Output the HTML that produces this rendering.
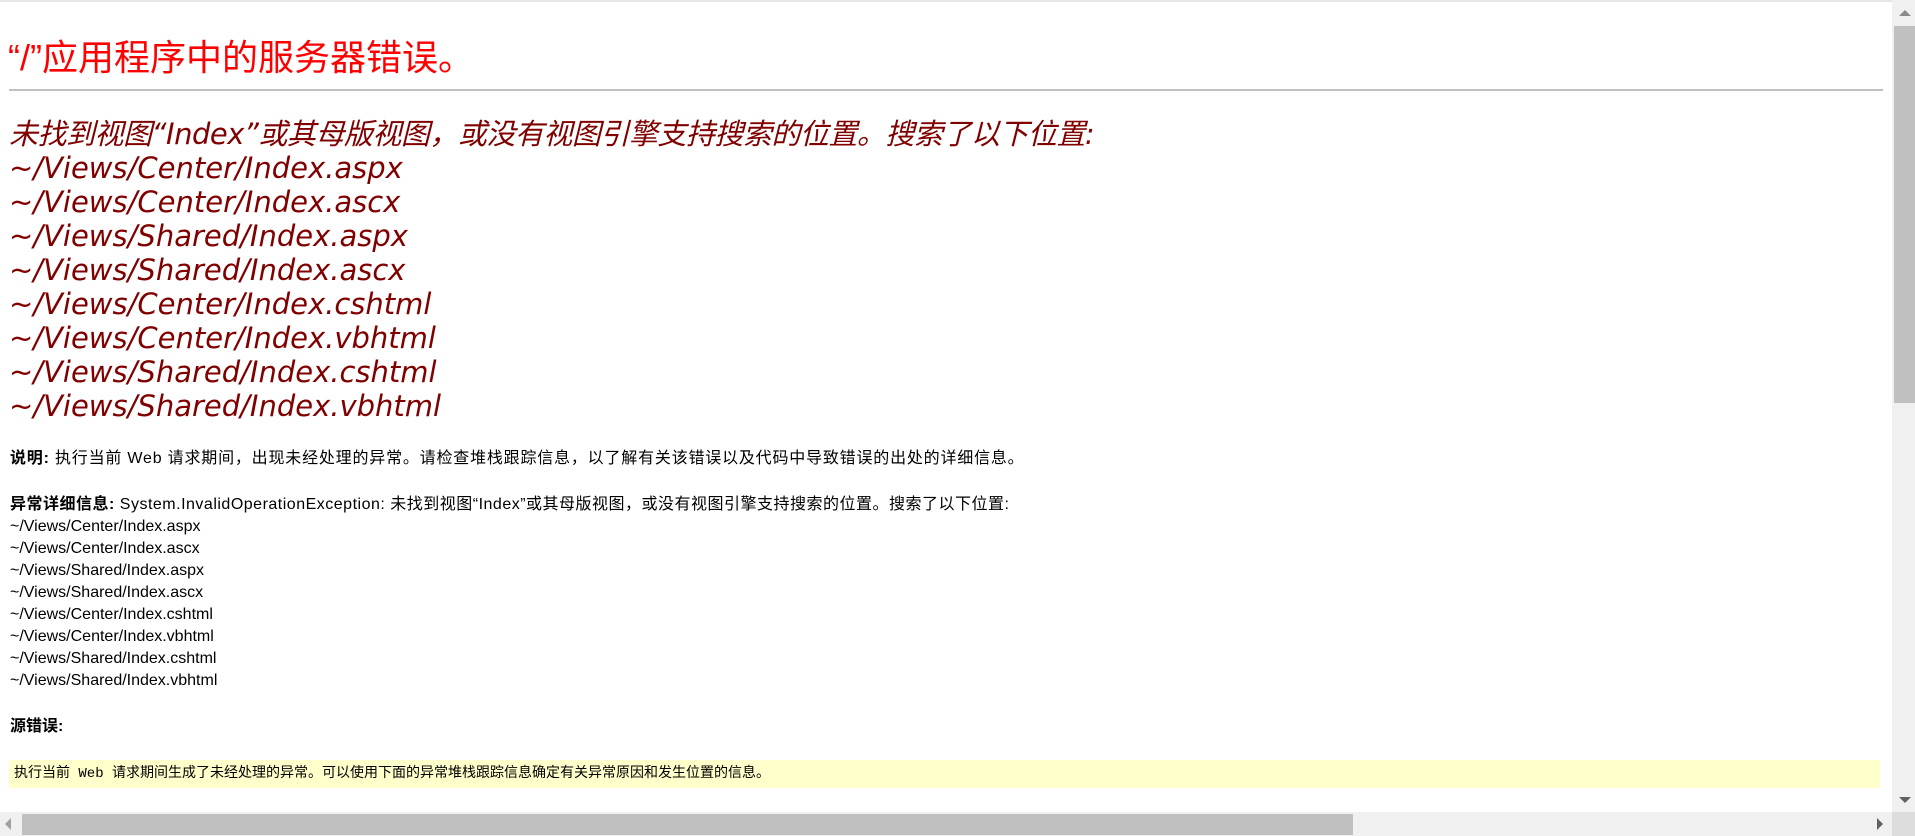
<!DOCTYPE html>
<html><head><meta charset="utf-8"><style>
html,body{margin:0;padding:0;width:1915px;height:836px;overflow:hidden;background:#fff;}
.a{position:absolute;white-space:nowrap;}
.t{font-family:"Liberation Sans","Noto Sans CJK SC",sans-serif;font-size:36px;color:#f00;left:8px;top:29px;}
.h{font-family:"DejaVu Sans","Noto Sans CJK SC",sans-serif;font-style:italic;font-size:29px;color:#800000;left:9px;line-height:34px;top:117px;}
.h span{letter-spacing:-0.5px}
.b{font-family:"Liberation Sans","Noto Sans CJK SC",sans-serif;font-size:16px;color:#000;left:10px;line-height:22px;}
.code{position:absolute;left:9px;top:760px;width:1871px;height:28px;background:#ffffcc;font-family:"Liberation Mono","Noto Sans CJK SC",monospace;font-size:14px;line-height:28px;text-indent:5px;}
</style></head><body>
<div style="position:absolute;left:0;top:0;width:1892px;height:2px;background:#e6e6e6"></div>
<div class="a t">“/”应用程序中的服务器错误。</div>
<div style="position:absolute;left:9px;top:89px;width:1874px;height:2px;background:#c0c0c0"></div>
<div class="a h"><span>未找到视图“Index”或其母版视图，或没有视图引擎支持搜索的位置。搜索了以下位置:</span><br>~/Views/Center/Index.aspx<br>~/Views/Center/Index.ascx<br>~/Views/Shared/Index.aspx<br>~/Views/Shared/Index.ascx<br>~/Views/Center/Index.cshtml<br>~/Views/Center/Index.vbhtml<br>~/Views/Shared/Index.cshtml<br>~/Views/Shared/Index.vbhtml</div>
<div class="a b" style="top:448px;letter-spacing:0.8px"><b>说明:</b> 执行当前 Web 请求期间，出现未经处理的异常。请检查堆栈跟踪信息，以了解有关该错误以及代码中导致错误的出处的详细信息。</div>
<div class="a b" style="top:494px"><span style="letter-spacing:0.5px"><b>异常详细信息:</b> System.InvalidOperationException: 未找到视图“Index”或其母版视图，或没有视图引擎支持搜索的位置。搜索了以下位置:</span><br>~/Views/Center/Index.aspx<br>~/Views/Center/Index.ascx<br>~/Views/Shared/Index.aspx<br>~/Views/Shared/Index.ascx<br>~/Views/Center/Index.cshtml<br>~/Views/Center/Index.vbhtml<br>~/Views/Shared/Index.cshtml<br>~/Views/Shared/Index.vbhtml</div>
<div class="a b" style="top:716px"><b>源错误:</b></div>
<div class="code">执行当前 Web 请求期间生成了未经处理的异常。可以使用下面的异常堆栈跟踪信息确定有关异常原因和发生位置的信息。</div>
<div style="position:absolute;left:1892px;top:0;width:23px;height:812px;background:#f0f0f0"></div>
<div style="position:absolute;left:1894px;top:26px;width:21px;height:377px;background:#c0c0c0"></div>
<div style="position:absolute;left:1899px;top:10px;width:0;height:0;border-left:6px solid transparent;border-right:6px solid transparent;border-bottom:6px solid #8a8a8a"></div>
<div style="position:absolute;left:1899px;top:797px;width:0;height:0;border-left:6px solid transparent;border-right:6px solid transparent;border-top:6px solid #606060"></div>
<div style="position:absolute;left:0;top:812px;width:1892px;height:24px;background:#f0f0f0"></div>
<div style="position:absolute;left:1892px;top:812px;width:23px;height:24px;background:#dcdcdc"></div>
<div style="position:absolute;left:22px;top:814px;width:1331px;height:21px;background:#c0c0c0"></div>
<div style="position:absolute;left:5px;top:818px;width:0;height:0;border-top:6px solid transparent;border-bottom:6px solid transparent;border-right:6px solid #a0a0a0"></div>
<div style="position:absolute;left:1877px;top:818px;width:0;height:0;border-top:6px solid transparent;border-bottom:6px solid transparent;border-left:6px solid #606060"></div>
</body></html>
